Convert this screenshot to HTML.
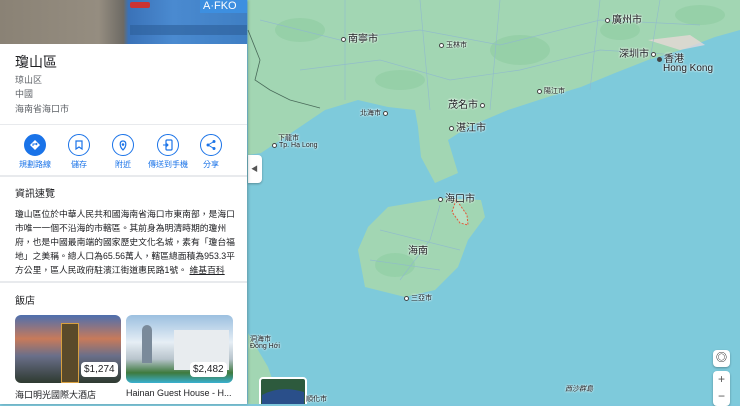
<!DOCTYPE html>
<html><head><meta charset="utf-8"><style>
*{margin:0;padding:0;box-sizing:border-box}
body{width:740px;height:404px;overflow:hidden;position:relative;font-family:"Liberation Sans","Noto Sans CJK TC",sans-serif;background:#7ec8dc}
#map{position:absolute;left:0;top:0}
#panel{position:absolute;left:0;top:0;width:247px;height:404px;background:#fff;box-shadow:1px 0 3px rgba(0,0,0,.25);overflow:hidden}
.t{position:absolute;white-space:nowrap;color:#202124}
.btn{position:absolute;top:134px;width:22px;height:22px;border-radius:50%;border:1px solid #1a73e8;background:#fff}
.bl{position:absolute;top:159px;font-size:8px;color:#1a73e8;white-space:nowrap;transform:translateX(-50%)}
.sep{position:absolute;left:0;width:247px;height:1px;background:#e8eaed}
.ml{position:absolute;font-size:9px;color:#202124;white-space:nowrap;text-shadow:0 0 2px #fff,0 0 2px #fff}
.dot{display:inline-block;width:5px;height:5px;border:1px solid #444;border-radius:50%;background:#fff;margin:0 2px;vertical-align:middle}
.ctl{position:absolute;background:#fff;border-radius:4px;box-shadow:0 1px 2px rgba(0,0,0,.3)}
</style></head><body>
<svg id="map" width="740" height="404" viewBox="0 0 740 404">
<rect width="740" height="404" fill="#7ecadb"/>
<path d="M248 0 H740 V30 L715 37 L681 50 L648 60 L615 73 L581 87 L548 97 L508 110 L468 127 L448 140 L458 173 L435 183 L421 157 L418 127 L415 110 L388 107 L358 100 L325 110 L291 133 L261 153 L248 155 Z" fill="#a2d6b3"/>
<g fill="#94cfa6" opacity=".8">
<ellipse cx="300" cy="30" rx="25" ry="12"/><ellipse cx="520" cy="50" rx="30" ry="15"/><ellipse cx="620" cy="30" rx="20" ry="10"/><ellipse cx="400" cy="80" rx="25" ry="10"/><ellipse cx="700" cy="15" rx="25" ry="10"/>
</g>
<path d="M648 40 L690 35 L705 45 L680 50 Z" fill="#f1d8dc" opacity=".7"/>
<path d="M388 207 L441 198 L481 200 L485 217 L468 240 L458 267 L435 290 L405 297 L365 287 L358 250 L368 227 Z" fill="#a2d6b3"/>
<ellipse cx="395" cy="265" rx="20" ry="12" fill="#94cfa6" opacity=".8"/>
<path d="M248 333 L268 367 L281 404 L248 404 Z" fill="#a2d6b3"/>
<g fill="none" stroke="#8fb8cf" stroke-width=".7" opacity=".8">
<path d="M260 20 L340 40 L420 30 L500 45 L600 20 L700 25"/>
<path d="M300 70 L380 60 L450 80 L520 70 L600 50 L680 55"/>
<path d="M345 0 L345 100 M420 0 L430 110 M500 0 L490 110 M600 0 L590 90 M660 0 L650 60"/>
<path d="M440 205 L430 240 L400 280 M380 230 L460 250 M370 260 L440 270"/>
</g>
<path d="M248 30 L260 60 L255 80 L270 90 L290 100 L320 108" fill="none" stroke="#4a6b5a" stroke-width=".8"/>
<path d="M456 200 L452 212 L460 223 L468 225 L467 215 L460 205 Z" fill="#b6e0c4" stroke="#e05a3a" stroke-width="1" stroke-dasharray="2,1.5"/>
<rect x="260" y="378" width="46" height="30" rx="3" fill="#2d5a3d" stroke="#fff" stroke-width="2"/>
<path d="M262 395 Q280 385 304 392 V404 H262Z" fill="#2a4f8a"/>
</svg>
<div class="ml" style="left:339px;top:30px;font-size:10px"><span class="dot"></span>南寧市</div>
<div class="ml" style="left:437px;top:40px;font-size:7px"><span class="dot"></span>玉林市</div>
<div class="ml" style="left:603px;top:11px;font-size:10px"><span class="dot"></span>廣州市</div>
<div class="ml" style="left:619px;top:45px;font-size:10px">深圳市<span class="dot"></span></div>
<div class="ml" style="left:655px;top:55px;font-size:10px;line-height:9px"><span class="dot" style="background:#444"></span>香港<br><span style="margin-left:8px">Hong Kong</span></div>
<div class="ml" style="left:535px;top:86px;font-size:7px"><span class="dot"></span>陽江市</div>
<div class="ml" style="left:448px;top:96px;font-size:10px">茂名市<span class="dot"></span></div>
<div class="ml" style="left:360px;top:108px;font-size:7px">北海市<span class="dot"></span></div>
<div class="ml" style="left:447px;top:119px;font-size:10px"><span class="dot"></span>湛江市</div>
<div class="ml" style="left:270px;top:135px;font-size:7px;line-height:7px"><span style="margin-left:8px">下龍市</span><br><span class="dot"></span>Tp. Hạ Long</div>
<div class="ml" style="left:436px;top:190px;font-size:10px"><span class="dot"></span>海口市</div>
<div class="ml" style="left:408px;top:242px;font-size:10px">海南</div>
<div class="ml" style="left:402px;top:293px;font-size:7px"><span class="dot"></span>三亞市</div>
<div class="ml" style="left:250px;top:336px;font-size:7px;line-height:7px">洞海市<br>Đồng Hới</div>
<div class="ml" style="left:565px;top:384px;font-size:7px;font-style:italic">西沙群島</div>
<div class="ml" style="left:306px;top:394px;font-size:7px">順化市</div>
<div class="ctl" style="left:248px;top:155px;width:14px;height:28px;border-radius:0 4px 4px 0;font-size:7px;color:#555;padding:9px 0 0 3px">◀</div>
<div class="ctl" style="left:713px;top:350px;width:17px;height:17px;text-align:center;font-size:11px;line-height:17px">◎</div>
<div class="ctl" style="left:713px;top:371px;width:17px;height:35px;text-align:center;font-size:12px;line-height:17px;color:#555">+<br>−</div>
<div id="panel">
<div style="position:absolute;left:0;top:0;width:247px;height:44px;background:linear-gradient(90deg,#8a8275 0,#958d80 40%,#6d6a64 50%,#3a72b8 52%,#4a8ad0 70%,#3f7fc4 100%)"></div>
<div style="position:absolute;left:130px;top:25px;width:117px;height:10px;background:#2d5f9a;opacity:.6"></div>
<div style="position:absolute;left:200px;top:0;width:47px;height:13px;background:#3d8fe0;color:#fff;font-size:11px;padding-left:3px">A·FKO</div>
<div style="position:absolute;left:130px;top:2px;width:20px;height:6px;background:#c33;border-radius:2px"></div>
<div class="t" style="left:15px;top:52px;font-size:14px">瓊山區</div>
<div class="t" style="left:15px;top:73px;font-size:9px;color:#5f6368">琼山区</div>
<div class="t" style="left:15px;top:87px;font-size:9px;color:#5f6368">中國</div>
<div class="t" style="left:15px;top:102px;font-size:9px;color:#5f6368">海南省海口市</div>
<div class="sep" style="top:124px"></div>
<div class="btn" style="left:24px;background:#1a73e8"><svg width="20" height="20" viewBox="0 0 20 20"><path d="M10 5 L15 10 L10 15 L5 10Z" fill="#fff"/><path d="M8 11 V9 H12 M11 8 L12 9 L11 10" stroke="#1a73e8" fill="none" stroke-width="1"/></svg></div>
<div class="btn" style="left:68px"><svg width="20" height="20" viewBox="0 0 20 20"><path d="M7 6 H13 V14 L10 12 L7 14Z" fill="none" stroke="#1a73e8" stroke-width="1.2"/></svg></div>
<div class="btn" style="left:112px"><svg width="20" height="20" viewBox="0 0 20 20"><path d="M10 15 C6 11 6.5 6 10 6 C13.5 6 14 11 10 15Z" fill="none" stroke="#1a73e8" stroke-width="1.2"/><circle cx="10" cy="9.5" r="1.3" fill="#1a73e8"/></svg></div>
<div class="btn" style="left:157px"><svg width="20" height="20" viewBox="0 0 20 20"><rect x="8" y="5" width="6" height="10" rx="1" fill="none" stroke="#1a73e8" stroke-width="1.2"/><path d="M5 10 H10 M8.5 8.5 L10 10 L8.5 11.5" stroke="#1a73e8" fill="none" stroke-width="1.1"/></svg></div>
<div class="btn" style="left:200px"><svg width="20" height="20" viewBox="0 0 20 20"><circle cx="13" cy="6.5" r="1.5" fill="#1a73e8"/><circle cx="7" cy="10" r="1.5" fill="#1a73e8"/><circle cx="13" cy="13.5" r="1.5" fill="#1a73e8"/><path d="M13 6.5 L7 10 L13 13.5" stroke="#1a73e8" fill="none"/></svg></div>
<div class="bl" style="left:35px">規劃路線</div>
<div class="bl" style="left:79px">儲存</div>
<div class="bl" style="left:123px">附近</div>
<div class="bl" style="left:168px">傳送到手機</div>
<div class="bl" style="left:211px">分享</div>
<div class="sep" style="top:175px;height:2px"></div>
<div class="t" style="left:15px;top:185px;font-size:10px">資訊速覽</div>
<div class="t" style="left:15px;top:207px;font-size:8.8px;line-height:14px;white-space:normal;width:224px;color:#202124">瓊山區位於中華人民共和國海南省海口市東南部，是海口市唯一一個不沿海的市轄區。其前身為明清時期的瓊州府，也是中國最南端的國家歷史文化名城，素有「瓊台福地」之美稱。總人口為65.56萬人，轄區總面積為953.3平方公里，區人民政府駐濱江街道惠民路1號。 <u>維基百科</u></div>
<div class="sep" style="top:281px;height:2px"></div>
<div class="t" style="left:15px;top:292px;font-size:10px">飯店</div>
<div style="position:absolute;left:15px;top:315px;width:106px;height:68px;border-radius:6px;overflow:hidden;background:linear-gradient(180deg,#4d6fae 0,#c87a5a 35%,#6a6f8a 60%,#2e3a30 100%)"><div style="position:absolute;left:46px;top:8px;width:18px;height:60px;background:#5a4a2a;border:1px solid #d8a040"></div></div>
<div style="position:absolute;left:126px;top:315px;width:107px;height:68px;border-radius:6px;overflow:hidden;background:linear-gradient(180deg,#9cc0e0 0,#e6eef5 40%,#b8c4cc 65%,#3e7a3e 85%,#3ab0d0 100%)"><div style="position:absolute;left:48px;top:15px;width:55px;height:40px;background:#e8ecef"></div><div style="position:absolute;left:16px;top:10px;width:10px;height:38px;background:#7a8a9a;border-radius:5px 5px 0 0"></div></div>
<div style="position:absolute;left:81px;top:362px;background:#fff;border-radius:4px;font-size:10px;padding:2px 3px;color:#202124">$1,274</div>
<div style="position:absolute;left:190px;top:362px;background:#fff;border-radius:4px;font-size:10px;padding:2px 3px;color:#202124">$2,482</div>
<div class="t" style="left:15px;top:388px;font-size:9px">海口明光國際大酒店</div>
<div class="t" style="left:126px;top:388px;font-size:9px">Hainan Guest House - H...</div>
</div>
</body></html>
